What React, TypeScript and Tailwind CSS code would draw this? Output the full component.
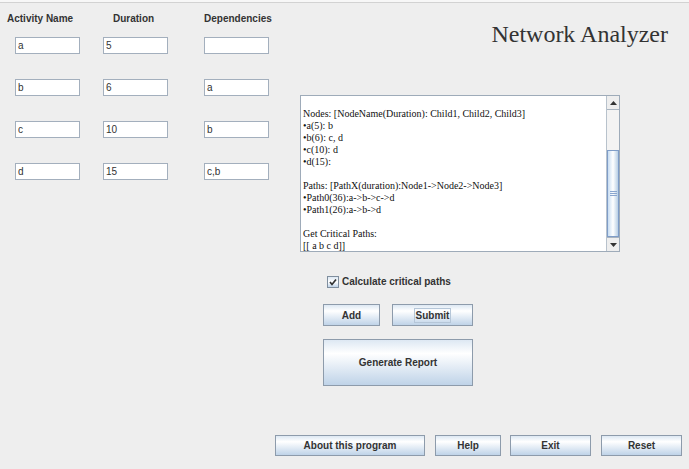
import React from 'react';

const sans = { fontFamily: '"Liberation Sans", Arial, sans-serif' };

function Field({ value }: { value: string }) {
  return (
    <div className="w-[65px] h-[17px] bg-white border border-[#a3afbd] flex items-center pl-[2px] text-[10px] text-[#333333]">
      {value}
    </div>
  );
}

function Btn({ label, className, focused }: { label: string; className: string; focused?: boolean }) {
  return (
    <button
      className={`flex items-center justify-center border border-[#8d9bab] bg-linear-to-b from-[#dde8f3] via-white via-30% to-[#bfd3e8] text-[10px] font-bold text-[#333333] ${className}`}
    >
      {focused ? (
        <span className="border border-[#b5c6d8] px-[1px] leading-[13px]">{label}</span>
      ) : (
        label
      )}
    </button>
  );
}

const rows = [
  ['a', '5', ''],
  ['b', '6', 'a'],
  ['c', '10', 'b'],
  ['d', '15', 'c,b'],
];

const lines = [
  '',
  'Nodes: [NodeName(Duration): Child1, Child2, Child3]',
  '•a(5): b',
  '•b(6): c, d',
  '•c(10): d',
  '•d(15):',
  '',
  'Paths: [PathX(duration):Node1->Node2->Node3]',
  '•Path0(36):a->b->c->d',
  '•Path1(26):a->b->d',
  '',
  'Get Critical Paths:',
  '[[ a b c d]]',
];

export default function App() {
  return (
    <div className="w-[689px] h-[469px] bg-[#eeeeee] overflow-hidden" style={sans}>
      <div className="h-[2px] bg-[#f7f7f7]" />
      <div className="border-t border-[#d2d2d2]">
        <div className="flex">
          {/* activity table */}
          <div className="w-[300px]">
            <div className="flex mt-[10px] text-[10px] leading-[12px] font-bold text-[#333333]">
              <span className="ml-[7px] w-[106px]">Activity Name</span>
              <span className="w-[91px]">Duration</span>
              <span>Dependencies</span>
            </div>
            <div className="flex flex-col gap-[25px] mt-[12px]">
              {rows.map((r, i) => (
                <div key={i} className="flex">
                  <div className="ml-[15px]">
                    <Field value={r[0]} />
                  </div>
                  <div className="ml-[23px]">
                    <Field value={r[1]} />
                  </div>
                  <div className="ml-[36px]">
                    <Field value={r[2]} />
                  </div>
                </div>
              ))}
            </div>
          </div>

          {/* right side */}
          <div className="flex-1 flex flex-col">
            <div
              className="self-end mr-[21px] mt-[17px] text-[24px] leading-[28px] text-[#333333]"
              style={{ fontFamily: '"Liberation Serif", "Times New Roman", serif' }}
            >
              Network Analyzer
            </div>

            <div className="mt-[47px] w-[320px] h-[157px] border border-[#9eabb9] bg-white flex">
              <div
                className="flex-1 pl-[2px] text-[10px] leading-[12px] text-[#111111] overflow-hidden"
                style={{ fontFamily: '"Liberation Serif", "Times New Roman", serif' }}
              >
                {lines.map((l, i) => (
                  <div key={i} className="h-[12px] whitespace-pre">
                    {l}
                  </div>
                ))}
              </div>
              <div className="w-[13px] border-l border-[#b8c2cc] bg-[#eeeeee] flex flex-col">
                <div className="h-[14px] border-b border-[#a9b4c0] flex items-center justify-center">
                  <svg width="7" height="4" viewBox="0 0 7 4">
                    <path d="M0 4 L3.5 0 L7 4 Z" fill="#333" />
                  </svg>
                </div>
                <div className="h-[40px] bg-[#f3f3f3]" />
                <div className="flex-1 border border-[#7f9dc8] bg-linear-to-r from-[#c8ddf2] via-white to-[#b8cfe5] flex flex-col items-center justify-center gap-[1px]">
                  <div className="w-[7px] h-px bg-[#8aa6cf]" />
                  <div className="w-[7px] h-px bg-[#8aa6cf]" />
                  <div className="w-[7px] h-px bg-[#8aa6cf]" />
                </div>
                <div className="h-[14px] border-t border-[#a9b4c0] flex items-center justify-center">
                  <svg width="7" height="4" viewBox="0 0 7 4">
                    <path d="M0 0 L7 0 L3.5 4 Z" fill="#333" />
                  </svg>
                </div>
              </div>
            </div>

            <div className="mt-[22px] ml-[27px] flex items-center gap-[3px]">
              <div className="w-[12px] h-[12px] border border-[#7f8e9e] bg-linear-to-b from-[#dde8f3] via-white to-[#bfd3e8] flex items-center justify-center">
                <svg width="10" height="10" viewBox="0 0 10 10">
                  <path d="M2 5 L4 7.5 L8 2.5" stroke="#333" strokeWidth="1.7" fill="none" />
                </svg>
              </div>
              <span className="text-[10px] font-bold text-[#333333]">Calculate critical paths</span>
            </div>

            <div className="mt-[15px] ml-[23px] flex gap-[12px]">
              <Btn label="Add" className="w-[57px] h-[22px]" />
              <Btn label="Submit" className="w-[81px] h-[22px]" focused />
            </div>

            <Btn label="Generate Report" className="mt-[13px] ml-[23px] w-[150px] h-[47px]" />
          </div>
        </div>

        <div className="mt-[49px] ml-[275px] flex">
          <Btn label="About this program" className="w-[150px] h-[21px]" />
          <Btn label="Help" className="ml-[10px] w-[66px] h-[21px]" />
          <Btn label="Exit" className="ml-[9px] w-[81px] h-[21px]" />
          <Btn label="Reset" className="ml-[10px] w-[81px] h-[21px]" />
        </div>
      </div>
    </div>
  );
}
